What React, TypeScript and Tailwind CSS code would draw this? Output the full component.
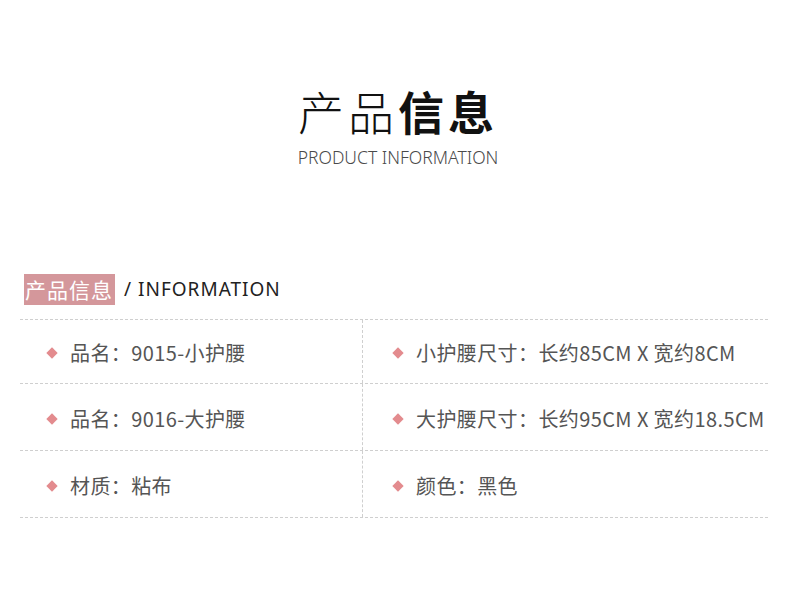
const rows: [string, string][] = [
  ["品名：9015-小护腰", "小护腰尺寸：长约85CM X 宽约8CM"],
  ["品名：9016-大护腰", "大护腰尺寸：长约95CM X 宽约18.5CM"],
  ["材质：粘布", "颜色：黑色"],
];

const cjk = { fontFamily: '"Noto Sans CJK SC", "Noto Sans", sans-serif' };

function Item({ text, pad }: { text: string; pad: string }) {
  return (
    <div className={`flex items-center pt-[3px] ${pad}`}>
      <span className="w-[8px] h-[8px] rotate-45 bg-[#e38b8e] shrink-0" />
      <span className="ml-[14px] text-[20px] tracking-[0.4px] text-[#555555] whitespace-nowrap">{text}</span>
    </div>
  );
}

export default function App() {
  return (
    <div className="w-[790px] h-[608px] bg-white overflow-hidden" style={cjk}>
      {/* heading */}
      <div className="pt-[82px] flex flex-col items-center pl-[6px]">
        <h1 className="text-[46px] leading-[56px] tracking-[4px] text-[#111111]">
          <span className="font-light">产品</span>
          <span className="font-bold">信息</span>
        </h1>
        <p className="mt-[7px] text-[17.5px] leading-[24px] font-light text-[#4a4a4a]" style={{ fontFamily: '"Noto Sans", sans-serif' }}>
          PRODUCT INFORMATION
        </p>
      </div>

      {/* section */}
      <div className="mt-[105px] px-[20px]">
        <div className="flex items-center pl-[4px]">
          <span className="inline-block bg-[#d4979b] text-white text-[21px] leading-[31px] pl-[1px] pr-[2px] tracking-[1px]">产品信息</span>
          <span className="ml-[9px] text-[19px] text-[#222222] tracking-[1px]" style={{ fontFamily: '"Noto Sans", sans-serif' }}>
            / INFORMATION
          </span>
        </div>

        <div className="mt-[14px] w-[748px] border-t border-dashed border-[#cfcfcf]">
          {rows.map(([l, r], i) => (
            <div key={i} className={`flex border-b border-dashed border-[#cfcfcf] ${i === 0 ? "h-[64px]" : "h-[67px]"}`}>
              <div className="w-[343px] border-r border-dashed border-[#cfcfcf] flex items-center">
                <Item text={l} pad="pl-[28px]" />
              </div>
              <div className="flex-1 flex items-center">
                <Item text={r} pad="pl-[31px]" />
              </div>
            </div>
          ))}
        </div>
      </div>
    </div>
  );
}
